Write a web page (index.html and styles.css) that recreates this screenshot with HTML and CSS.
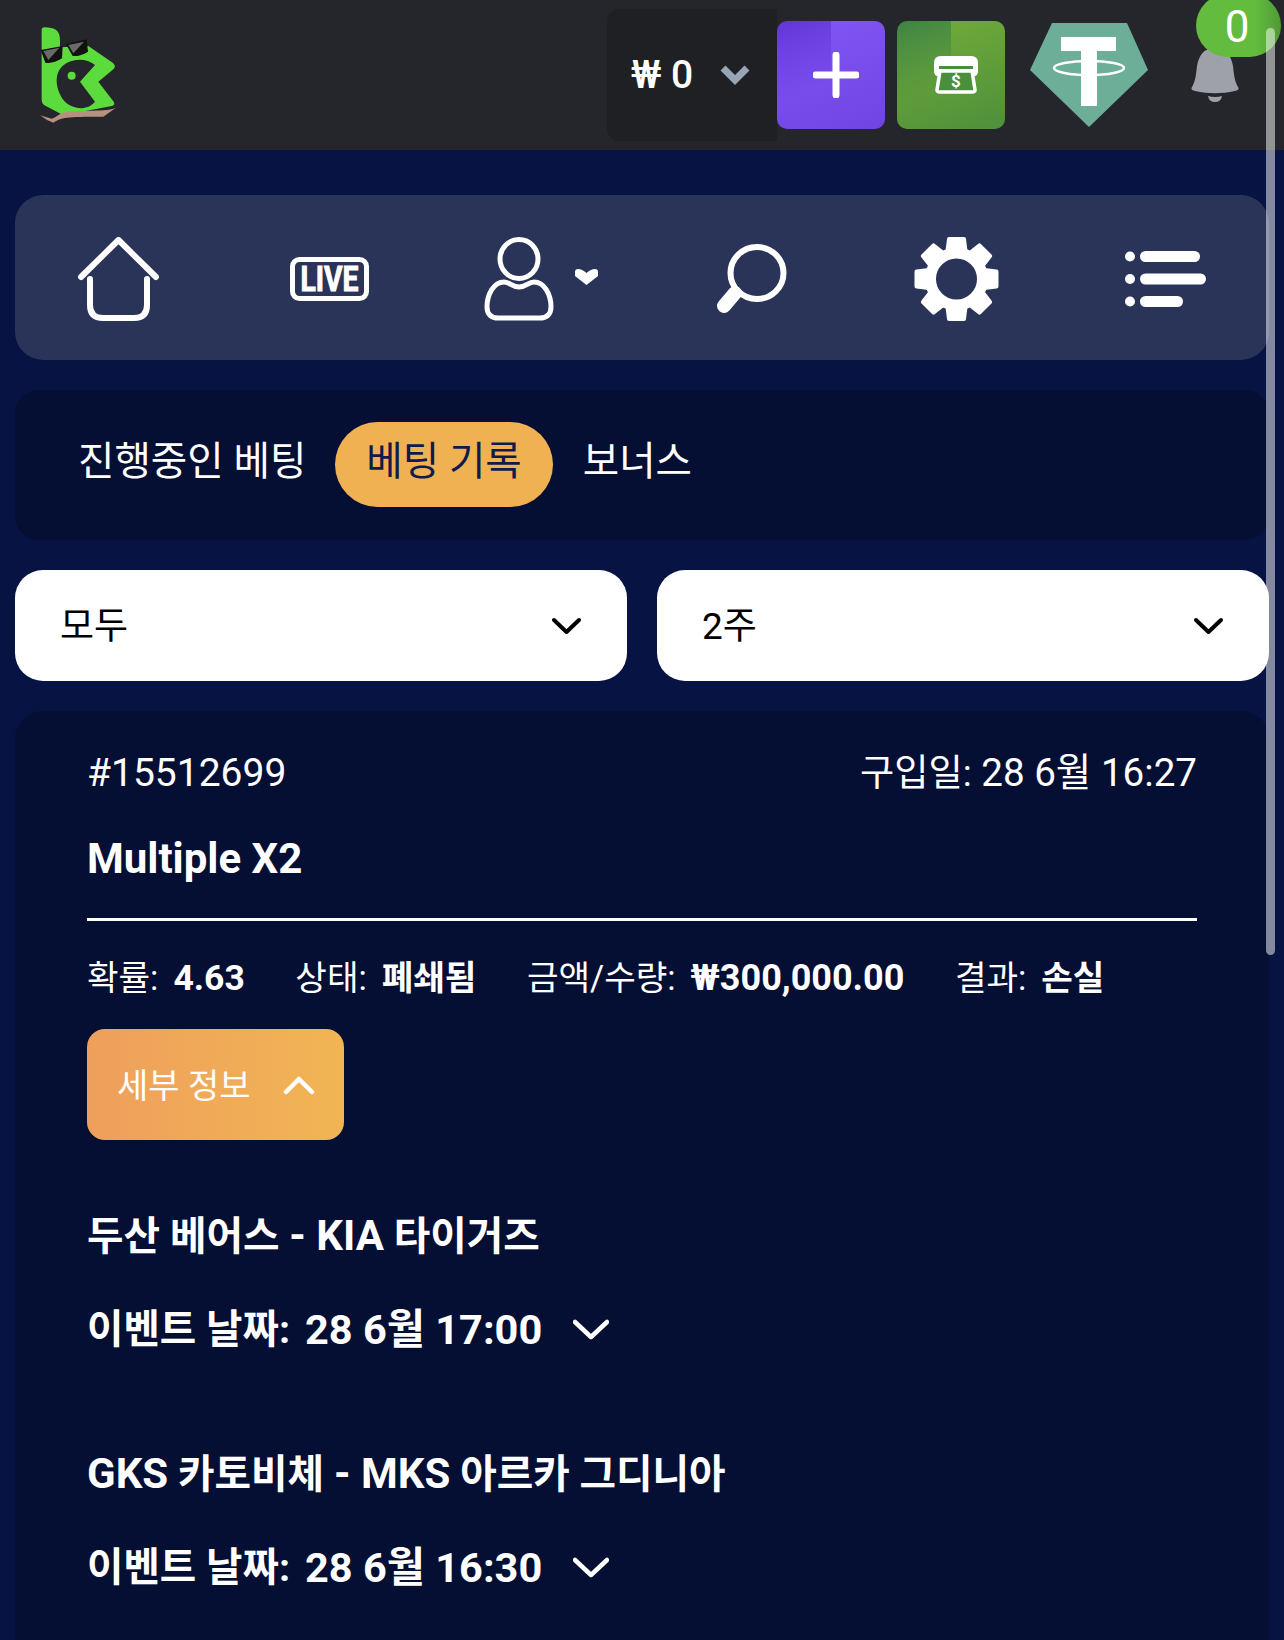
FILE: index.html
```html
<!DOCTYPE html>
<html lang="ko">
<head>
<meta charset="utf-8">
<title>베팅 기록</title>
<link rel="stylesheet" href="styles.css">
</head>
<body>
<header class="topbar">
  <svg class="logo" width="120" height="130" viewBox="0 0 360 390">
    <path fill="#5cdc3c" d="M65 60 Q65 52 73 52 C105 52 120 62 120 90 L120 112 L205 108 L278 158 Q290 168 280 178 L235 215 L281 275 Q287 285 275 288 L130 316 L72 285 Q65 280 65 270Z"/>
    <path fill="#25262b" d="M225 165 L180 215 L225 275 C205 300 165 300 140 280 C115 258 100 210 118 180 C140 145 195 140 225 165Z"/>
    <circle cx="155" cy="197" r="12" fill="#5cdc3c"/>
    <path fill="#111" d="M62 120 L128 108 L126 145 Q100 162 76 158Z"/>
    <path fill="#111" d="M138 103 L200 88 L204 125 Q180 140 158 138Z"/>
    <path fill="#6a6a6a" d="M70 123 L118 113 L85 150Z"/>
    <path fill="#6a6a6a" d="M145 105 L192 95 L160 130Z"/>
    <path fill="#b8917e" d="M60 316 Q80 332 100 338 C125 322 135 320 250 320 L290 292 C270 306 200 300 140 306 C115 310 112 322 95 326Z"/>
  </svg>
  <div class="balance">
    <span class="balance-text">₩ 0</span>
    <svg width="30" height="20" viewBox="0 0 30 20"><polyline points="3,3 15,15 27,3" fill="none" stroke="#97a5b6" stroke-width="7"/></svg>
  </div>
  <div class="tile tile-purple">
    <svg class="tile-plus" width="46" height="46" viewBox="0 0 46 46"><path d="M23 3V43M3 23H43" stroke="#fff" stroke-width="7" stroke-linecap="round"/></svg>
  </div>
  <div class="tile tile-green">
    <svg class="tile-cash" width="44" height="38" viewBox="0 0 44 38">
      <path d="M7 0H37Q44 0 44 7V15Q44 20 40 20H4Q0 20 0 15V7Q0 0 7 0Z" fill="#fff"/>
      <rect x="5" y="10" width="34" height="3" fill="#4a8f3c"/>
      <path d="M6 15H38L41 34Q41 36 38 36H6Q3 36 3 34Z" fill="#4a8f3c" stroke="#fff" stroke-width="3.5"/>
      <text x="22" y="31" class="cash-sign">$</text>
    </svg>
  </div>
  <svg class="tether" width="118" height="104" viewBox="0 0 118 104">
    <polygon points="22,0 97,0 118,47 59,104 0,47" fill="#6cae97"/>
    <path d="M31 14H86V28H67V83H51V28H31Z" fill="#fff"/>
    <ellipse cx="59" cy="45" rx="35" ry="7" fill="none" stroke="#fff" stroke-width="2.5"/>
  </svg>
  <div class="bell">
    <svg width="48" height="54" viewBox="0 0 48 54">
      <path d="M24 0C36 0 40 8 42 18C43 28 44 34 47 39Q49 42 44 43C30 46 18 46 4 43Q-1 42 1 39C4 34 5 28 6 18C8 8 12 0 24 0Z" fill="#9ea1aa"/>
      <path d="M17 48Q24 50 31 48Q30 54 24 54Q18 54 17 48Z" fill="#9ea1aa"/>
    </svg>
    <span class="badge">0</span>
  </div>
</header>

<main class="page">
  <nav class="iconbar">
    <svg class="nav-home" width="81" height="84" viewBox="0 0 81 84" fill="none" stroke="#fff" stroke-width="6" stroke-linecap="round" stroke-linejoin="round">
      <path d="M3 40L40.5 3L78 40"/>
      <path d="M12 42V68Q12 81 25 81H56Q69 81 69 68V42"/>
    </svg>
    <svg class="nav-live" width="79" height="44" viewBox="0 0 79 44">
      <rect x="2.5" y="2.5" width="74" height="39" rx="7" fill="none" stroke="#fff" stroke-width="5"/>
      <g transform="scale(1 1.2)"><text x="39.5" y="28" class="live-text" textLength="58" lengthAdjust="spacingAndGlyphs">LIVE</text></g>
    </svg>
    <div class="user-item">
      <svg width="70" height="84" viewBox="0 0 70 84" fill="none" stroke="#fff" stroke-width="5">
        <ellipse cx="35" cy="22" rx="19" ry="19.5"/>
        <path d="M20 45C26 45 27 50 35 50C43 50 44 45 50 45C60 45 67 57 67 70C67 78 62 81 56 81H14C8 81 3 78 3 70C3 57 10 45 20 45Z"/>
      </svg>
      <svg class="user-caret" width="23" height="16" viewBox="0 0 23 16"><path d="M0 3Q0 0 3 0Q7 0 11.500 4Q16 0 20 0Q23 0 23 3V7L11.500 16L0 7Z" fill="#fff"/></svg>
    </div>
    <svg class="nav-search" width="71" height="70" viewBox="0 0 71 70" fill="none" stroke="#fff">
      <ellipse cx="41" cy="29" rx="26.500" ry="26" stroke-width="6"/>
      <path d="M8 62L19 49" stroke-width="14" stroke-linecap="round"/>
    </svg>
    <svg class="nav-gear" width="85" height="84" viewBox="0 0 85 84">
      <defs><path id="tooth" d="M33 2Q33 0 35 0H50Q52 0 52 2L54 18H31Z" fill="#fff"/></defs>
      <use href="#tooth"/>
      <use href="#tooth" transform="rotate(45 42.500 42)"/>
      <use href="#tooth" transform="rotate(90 42.500 42)"/>
      <use href="#tooth" transform="rotate(135 42.500 42)"/>
      <use href="#tooth" transform="rotate(180 42.500 42)"/>
      <use href="#tooth" transform="rotate(225 42.500 42)"/>
      <use href="#tooth" transform="rotate(270 42.500 42)"/>
      <use href="#tooth" transform="rotate(315 42.500 42)"/>
      <circle cx="42.500" cy="42" r="26" fill="none" stroke="#fff" stroke-width="11"/>
    </svg>
    <svg class="nav-list" width="81" height="56" viewBox="0 0 81 56" fill="#fff">
      <circle cx="5" cy="5.500" r="5"/><rect x="15" y="0" width="60" height="11" rx="5.500"/>
      <circle cx="5" cy="28" r="5"/><rect x="15" y="22.500" width="66" height="11" rx="5.500"/>
      <circle cx="5" cy="50.500" r="5"/><rect x="15" y="45" width="43" height="11" rx="5.500"/>
    </svg>
  </nav>

  <section class="tabs">
    <span class="tab tab-first">진행중인 베팅</span>
    <span class="tab tab-active">베팅 기록</span>
    <span class="tab">보너스</span>
  </section>

  <section class="filters">
    <div class="select"><span>모두</span>
      <svg width="31" height="18" viewBox="0 0 31 18"><polyline points="3,3 15.500,15 28,3" fill="none" stroke="#000" stroke-width="4" stroke-linecap="round" stroke-linejoin="round"/></svg>
    </div>
    <div class="select"><span>2주</span>
      <svg width="31" height="18" viewBox="0 0 31 18"><polyline points="3,3 15.500,15 28,3" fill="none" stroke="#000" stroke-width="4" stroke-linecap="round" stroke-linejoin="round"/></svg>
    </div>
  </section>

  <article class="card">
    <div class="card-head"><span class="order-id">#15512699</span><span><span class="head-label">구입일:</span> 28 6월 16:27</span></div>
    <h2 class="card-title">Multiple X2</h2>
    <div class="stats">
      <span class="stat"><span>확률:</span><b class="odds">4.63</b></span>
      <span class="stat"><span>상태:</span><b class="ko">폐쇄됨</b></span>
      <span class="stat"><span>금액/수량:</span><b>₩300,000.00</b></span>
      <span class="stat"><span>결과:</span><b class="ko">손실</b></span>
    </div>
    <button class="details"><span class="details-label">세부 정보</span>
      <svg width="32" height="20" viewBox="0 0 32 20"><polyline points="3,17 16,4 29,17" fill="none" stroke="#fff" stroke-width="4.500" stroke-linecap="round" stroke-linejoin="round"/></svg>
    </button>
    <div class="match">
      <h3 class="match-title">두산 베어스 <span class="lat">- KIA</span> 타이거즈</h3>
      <div class="match-date"><span class="date-label">이벤트 날짜:</span><span class="date-value">28 6월 17:00</span>
        <svg class="date-caret" width="36" height="22" viewBox="0 0 36 22"><polyline points="2,3 18,18 34,3" fill="none" stroke="#fff" stroke-width="4.500" stroke-linecap="round" stroke-linejoin="round"/></svg>
      </div>
    </div>
    <div class="match">
      <h3 class="match-title"><span class="lat">GKS</span> 카토비체 <span class="lat">- MKS</span> 아르카 그디니아</h3>
      <div class="match-date"><span class="date-label">이벤트 날짜:</span><span class="date-value">28 6월 16:30</span>
        <svg class="date-caret" width="36" height="22" viewBox="0 0 36 22"><polyline points="2,3 18,18 34,3" fill="none" stroke="#fff" stroke-width="4.500" stroke-linecap="round" stroke-linejoin="round"/></svg>
      </div>
    </div>
  </article>
</main>
<div class="scrollbar"></div>
</body>
</html>
```
FILE: styles.css
```css
* { box-sizing: border-box; }
html, body { margin: 0; height: 1640px; overflow: hidden; }
body {
  background: #071343;
  color: #fff;
  font-family: Roboto, "Noto Sans CJK KR", sans-serif;
  font-size: 38px;
}
.topbar {
  height: 150px;
  background: #25262b;
  display: flex;
  align-items: center;
  padding-left: 20px;
}
.logo { margin-right: auto; }
.balance {
  width: 170px;
  height: 132px;
  background: #1f2024;
  border-radius: 12px 0 0 12px;
  display: flex;
  align-items: center;
  padding-left: 24px;
  gap: 27px;
}
.balance-text { font-size: 39px; font-weight: 500; white-space: nowrap; }
.tile {
  width: 108px;
  height: 108px;
  border-radius: 10px;
  display: flex;
  align-items: center;
  justify-content: center;
}
.tile-purple {
  background:
    linear-gradient(160deg, #6335d6 0%, rgba(99,53,214,0) 65%) left top / 50% 100% no-repeat,
    linear-gradient(160deg, #8257f7 0%, #7044e2 100%);
}
.tile-green {
  margin-left: 12px;
  background:
    linear-gradient(160deg, #3e8245 0%, rgba(62,130,69,0) 65%) left top / 50% 100% no-repeat,
    linear-gradient(160deg, #72ad38 0%, #4f8f3c 100%);
}
.tile-plus, .tile-cash { transform: translateX(5px); }
.cash-sign { fill: #fff; font: 700 17px Roboto, sans-serif; text-anchor: middle; }
.tether { margin-left: 25px; margin-right: 43px; }
.bell { position: relative; width: 48px; height: 54px; margin-right: 45px; }
.bell svg { display: block; }
.badge {
  position: absolute;
  left: 5px;
  top: -54px;
  width: 85px;
  height: 63px;
  border-radius: 32px;
  background: linear-gradient(90deg, #63bc3e 70%, #4f9a35 100%);
  text-align: center;
  font-size: 44px;
  line-height: 66px;
  padding-right: 3px;
}
.page { padding: 45px 15px 0; }
.iconbar {
  height: 165px;
  background: #2a3358;
  border-radius: 28px;
  padding-top: 3px;
  display: grid;
  grid-template-columns: repeat(6, 1fr);
  align-items: center;
  justify-items: center;
}
.nav-home { margin-left: -2px; }
.nav-live { margin-left: 2px; }
.user-item { display: flex; align-items: center; gap: 21px; margin-left: 6px; }
.user-caret { margin-top: -4px; }
.nav-search { margin-left: 9px; }
.nav-gear { margin-left: 2px; }
.nav-list { margin-left: 2px; }
.live-text { fill: #fff; stroke: #fff; stroke-width: .8; font: 700 29px Roboto, sans-serif; text-anchor: middle; }
.tabs {
  margin-top: 30px;
  height: 150px;
  background: #050e33;
  border-radius: 24px;
  display: flex;
  align-items: center;
  padding: 0 33px;
}
.tab { padding: 0 30px; height: 85px; margin-top: -2px; line-height: 80px; font-size: 39.6px; white-space: nowrap; }
.tab-first { padding-right: 29px; }
.tab-active { padding: 0 31px; background: #f0b153; border-radius: 43px; color: #0f1a4d; }
.filters { margin-top: 30px; display: grid; grid-template-columns: 1fr 1fr; gap: 30px; }
.select {
  height: 111px;
  background: #fff;
  border-radius: 28px;
  color: #000;
  font-size: 37px;
  display: flex;
  align-items: center;
  justify-content: space-between;
  padding: 0 45px;
}
.select span { margin-top: -5px; }
.card {
  margin-top: 30px;
  height: 1000px;
  background: #050e33;
  border-radius: 28px;
  padding: 35px 72px 0 72px;
}
.card-head { display: flex; justify-content: space-between; line-height: 54px; font-size: 38.6px; }
.order-id { font-size: 39px; }
.head-label { font-size: 37.2px; }
.card-title { margin: 0; padding: 37px 0 37px; font-size: 42px; line-height: 44px; font-weight: 700; border-bottom: 3px solid #fff; }
.stats { display: flex; gap: 50.500px; margin-top: 30px; font-size: 34.3px; line-height: 54px; white-space: nowrap; }
.stat { display: flex; gap: 15px; }
.stat b { font-size: 36px; }
.stat b.odds { font-size: 35.500px; }
.stat b.ko { font-size: 34.3px; }
.details {
  display: flex;
  align-items: center;
  gap: 32px;
  margin-top: 24px;
  width: 257px;
  height: 111px;
  padding: 0 0 0 30px;
  border: 0;
  border-radius: 18px;
  background: linear-gradient(90deg, #ef9f5c, #f1b554);
  color: #fff;
  font: 400 34px Roboto, "Noto Sans CJK KR", sans-serif;
  white-space: nowrap;
}
.details-label { margin-top: -3px; }
.match { margin-top: 66px; }
.match + .match { margin-top: 84px; }
.match-title { margin: 0; font-size: 39.7px; line-height: 60px; font-weight: 700; }
.lat { font-size: 42px; }
.match-date { display: flex; align-items: center; margin-top: 33px; line-height: 60px; font-weight: 700; white-space: nowrap; }
.date-label { font-size: 39.6px; }
.date-value { font-size: 41.5px; margin-left: 15px; }
.date-caret { margin-left: 31px; }
.scrollbar {
  position: fixed;
  left: 1266px;
  top: 28px;
  width: 9px;
  height: 927px;
  border-radius: 5px;
  background: rgba(255,255,255,.5);
}
```
